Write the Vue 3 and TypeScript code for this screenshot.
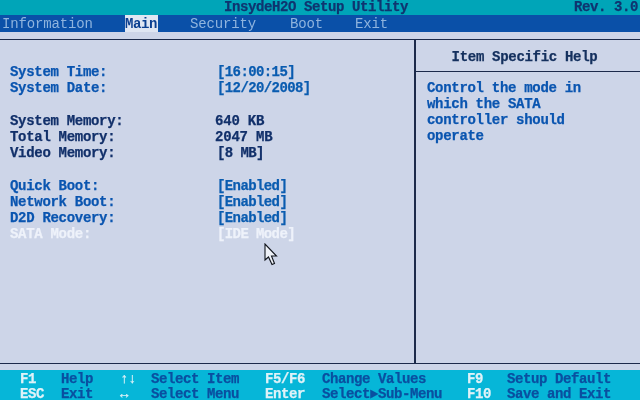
<script setup lang="ts">
type Row = { label: string; value: string; tone?: string; shift?: boolean }
const groups: { tone: string; rows: Row[] }[] = [
  { tone: 'blue', rows: [
    { label: 'System Time:', value: '[16:00:15]' },
    { label: 'System Date:', value: '[12/20/2008]' },
  ] },
  { tone: 'navy', rows: [
    { label: 'System Memory:', value: '640 KB', shift: true },
    { label: 'Total Memory:', value: '2047 MB', shift: true },
    { label: 'Video Memory:', value: '[8 MB]' },
  ] },
  { tone: 'blue', rows: [
    { label: 'Quick Boot:', value: '[Enabled]' },
    { label: 'Network Boot:', value: '[Enabled]' },
    { label: 'D2D Recovery:', value: '[Enabled]' },
    { label: 'SATA Mode:', value: '[IDE Mode]', tone: 'off' },
  ] },
]
const tabs = ['Information', 'Main', 'Security', 'Boot', 'Exit']
const help = ['Control the mode in', 'which the SATA', 'controller should', 'operate']
const keys = [
  ['F1', 'Help', '↑↓', 'Select Item', 'F5/F6', 'Change Values', 'F9', 'Setup Default'],
  ['ESC', 'Exit', '↔', 'Select Menu', 'Enter', 'Select►Sub-Menu', 'F10', 'Save and Exit'],
]
</script>

<template>
  <div class="screen">
    <header class="title">
      <span class="name">InsydeH2O Setup Utility</span>
      <span class="rev">Rev. 3.0</span>
    </header>
    <nav class="tabs">
      <span v-for="t in tabs" :key="t" class="tab" :class="[t.toLowerCase(), { on: t === 'Main' }]">{{ t }}</span>
    </nav>
    <main class="body">
      <section class="left">
        <div v-for="(g, i) in groups" :key="i" class="group" :class="g.tone">
          <div v-for="r in g.rows" :key="r.label" class="row" :class="r.tone">
            <span>{{ r.label }}</span>
            <span :class="['val', { shift: r.shift }]">{{ r.value }}</span>
          </div>
        </div>
      </section>
      <aside class="right">
        <h2 class="help-head">Item Specific Help</h2>
        <div class="help-body">
          <div v-for="h in help" :key="h">{{ h }}</div>
        </div>
      </aside>
    </main>
    <footer class="keys">
      <div v-for="(k, i) in keys" :key="i" class="key-row">
        <span v-for="(c, j) in k" :key="j" :class="j % 2 === 0 ? 'k' : 'd'">{{ c }}</span>
      </div>
    </footer>
    <svg class="cursor" width="15" height="24" viewBox="0 0 15 24">
      <path d="M1 1 L1 17 L4.5 14 L8 21.5 L10.5 20.5 L7.5 13 L12.5 13 Z" fill="#eef1f7" stroke="#10141c" stroke-width="1.1" stroke-linejoin="miter"/>
    </svg>
  </div>
</template>

<style>
html, body { margin: 0; background: #cdd5e8; }
</style>

<style scoped>
.screen {
  position: relative;
  width: 640px;
  height: 400px;
  overflow: hidden;
  display: flex;
  flex-direction: column;
  background: #cdd5e8;
  font: bold 14px/16px "Liberation Mono", monospace;
  letter-spacing: -0.3px;
  -webkit-text-stroke: 0.25px currentColor;
  filter: blur(0.35px);
}
.title {
  height: 15px;
  flex: none;
  background: #00a5b8;
  color: #0f3470;
  display: flex;
  line-height: 15px;
  letter-spacing: -0.4px;
}
.name { margin-left: 224px; }
.rev { margin-left: auto; margin-right: 2px; }
.tabs {
  height: 17px;
  flex: none;
  background: #0a50a8;
  color: #8fb4de;
  display: flex;
  line-height: 18px;
  font-weight: normal;
  -webkit-text-stroke: 0;
}
.tab { letter-spacing: -0.15px; }
.information { margin-left: 2px; width: 123px; }
.main {
  width: 33px;
  margin-right: 32px;
  flex: none;
  background: #dfe6f2;
  color: #0b3f90;
  font-weight: bold;
  letter-spacing: -0.4px;
}
.security { width: 100px; }
.boot { width: 65px; }
.body {
  flex: 1;
  margin-top: 7px;
  display: flex;
  border-top: 1.5px solid #1c2a4a;
  border-bottom: 1.5px solid #1c2a4a;
  margin-bottom: 6px;
}
.left {
  width: 416px;
  box-sizing: border-box;
  padding: 24px 0 0 10px;
  border-right: 2px solid #1c2a4a;
  display: flex;
  flex-direction: column;
  gap: 17px;
}
.row { display: grid; grid-template-columns: 207px auto; }
.blue { color: #0a55b0; }
.navy { color: #12306a; }
.off { color: #eef2fa; }
.val { letter-spacing: -0.6px; }
.val.shift { margin-left: -2px; letter-spacing: -0.2px; }
.blue .val { color: #0a5cb0; }
.navy .val { color: #12306a; }
.off .val { color: #eef2fa; }
.right { flex: 1; display: flex; flex-direction: column; }
.help-head {
  margin: 0;
  height: 32px;
  box-sizing: border-box;
  border-bottom: 1.5px solid #1c2a4a;
  text-align: center;
  font: inherit;
  line-height: 34px;
  color: #14305e;
  padding-right: 7px;
}
.help-body { padding: 8px 0 0 11px; color: #0a55b0; }
.keys {
  height: 30px;
  flex: none;
  background: #06b6d8;
  padding-top: 3px;
  box-sizing: border-box;
  line-height: 12px;
  letter-spacing: -0.4px;
  display: flex;
  flex-direction: column;
  gap: 3px;
}
.key-row {
  display: grid;
  grid-template-columns: 41px 59px 31px 114px 57px 145px 40px auto;
  padding-left: 20px;
}
.k { color: #dff2f8; }
.d { color: #0a4fa0; }
.cursor { position: absolute; left: 264px; top: 243px; }
</style>
